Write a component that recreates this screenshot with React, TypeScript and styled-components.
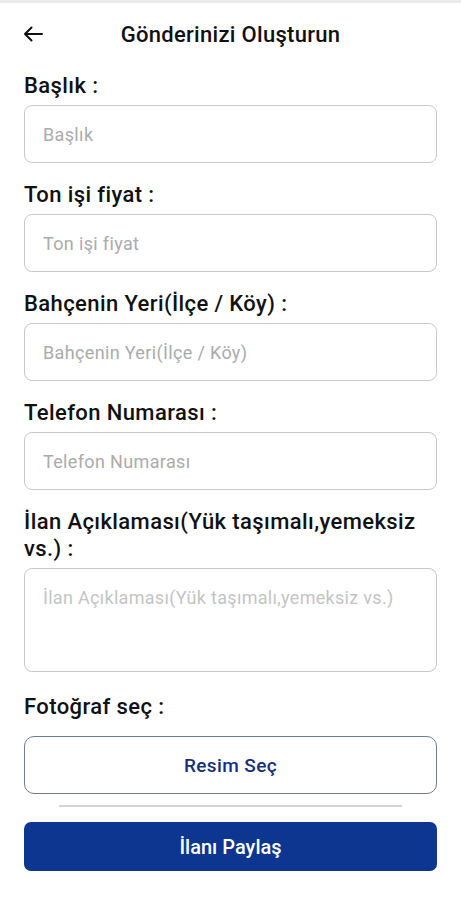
import React from "react";
import styled, { createGlobalStyle } from "styled-components";

const GlobalStyle = createGlobalStyle`
  body {
    margin: 0;
    background: #ffffff;
    font-family: Roboto, "Liberation Sans", sans-serif;
  }
  * {
    box-sizing: border-box;
  }
`;

const Screen = styled.div`
  width: 461px;
  min-height: 900px;
  background: #fff;
  border-top: 3px solid #ececec;
`;

const Header = styled.header`
  height: 62px;
  display: flex;
  align-items: center;
  padding: 0 23px;
`;

const BackButton = styled.button`
  border: none;
  background: none;
  padding: 0;
  width: 20px;
  height: 20px;
  display: flex;
  align-items: center;
  justify-content: center;
  cursor: pointer;
`;

const Title = styled.h1`
  flex: 1;
  margin: 0 0 0 -20px;
  text-align: center;
  font-size: 22px;
  font-weight: 500;
  letter-spacing: 0.3px;
  color: #111;
`;

const Form = styled.form`
  padding: 7px 24px 0 24px;
  display: flex;
  flex-direction: column;
`;

const Field = styled.div<{ $gap?: number }>`
  display: flex;
  flex-direction: column;
  margin-bottom: ${(p) => p.$gap ?? 18}px;
`;

const Label = styled.label`
  font-size: 22px;
  font-weight: 500;
  letter-spacing: 0.4px;
  color: #111;
  line-height: 27px;
  margin-bottom: 6px;
`;

const Input = styled.input`
  width: 100%;
  height: 58px;
  border: 1.5px solid #c9c9c9;
  border-radius: 8px;
  padding: 0 18px;
  font-family: inherit;
  font-size: 18px;
  letter-spacing: 0.35px;
  color: #222;
  outline: none;

  &::placeholder {
    color: #ababab;
  }
`;

const TextArea = styled.textarea`
  width: 100%;
  height: 104px;
  border: 1.5px solid #c9c9c9;
  border-radius: 8px;
  padding: 17px 18px;
  font-family: inherit;
  font-size: 18px;
  letter-spacing: 0.3px;
  line-height: 24px;
  color: #222;
  resize: none;
  outline: none;

  &::placeholder {
    color: #c4c4c4;
  }
`;

const OutlineButton = styled.button`
  width: 100%;
  height: 58px;
  border: 1.5px solid #6f7c96;
  border-radius: 10px;
  background: #fff;
  color: #17307a;
  font-family: inherit;
  font-size: 19px;
  font-weight: 500;
  letter-spacing: 0.4px;
  margin-top: 10px;
`;

const Divider = styled.hr`
  width: 343px;
  margin: 11px auto 15px;
  border: none;
  border-top: 2px solid #d4d4d4;
`;

const PrimaryButton = styled.button`
  width: 100%;
  height: 49px;
  border: none;
  border-radius: 7px;
  background: #0c3690;
  color: #fff;
  font-family: inherit;
  font-size: 20px;
  font-weight: 500;
`;

const fields = [
  { label: "Başlık :", placeholder: "Başlık" },
  { label: "Ton işi fiyat :", placeholder: "Ton işi fiyat" },
  { label: "Bahçenin Yeri(İlçe / Köy) :", placeholder: "Bahçenin Yeri(İlçe / Köy)" },
  { label: "Telefon Numarası :", placeholder: "Telefon Numarası" },
];

export default function App() {
  return (
    <Screen>
      <GlobalStyle />
      <Header>
        <BackButton aria-label="Geri">
          <svg width="20" height="16" viewBox="0 0 20 16" fill="none">
            <path
              d="M19 8H2M8.5 1.5L2 8l6.5 6.5"
              stroke="#111"
              strokeWidth="2"
              strokeLinecap="round"
              strokeLinejoin="round"
            />
          </svg>
        </BackButton>
        <Title>Gönderinizi Oluşturun</Title>
      </Header>
      <Form onSubmit={(e) => e.preventDefault()}>
        {fields.map((f) => (
          <Field key={f.label}>
            <Label>{f.label}</Label>
            <Input placeholder={f.placeholder} />
          </Field>
        ))}
        <Field $gap={21}>
          <Label>İlan Açıklaması(Yük taşımalı,yemeksiz vs.) :</Label>
          <TextArea placeholder="İlan Açıklaması(Yük taşımalı,yemeksiz vs.)" />
        </Field>
        <Label>Fotoğraf seç :</Label>
        <OutlineButton type="button">Resim Seç</OutlineButton>
        <Divider />
        <PrimaryButton type="submit">İlanı Paylaş</PrimaryButton>
      </Form>
    </Screen>
  );
}
